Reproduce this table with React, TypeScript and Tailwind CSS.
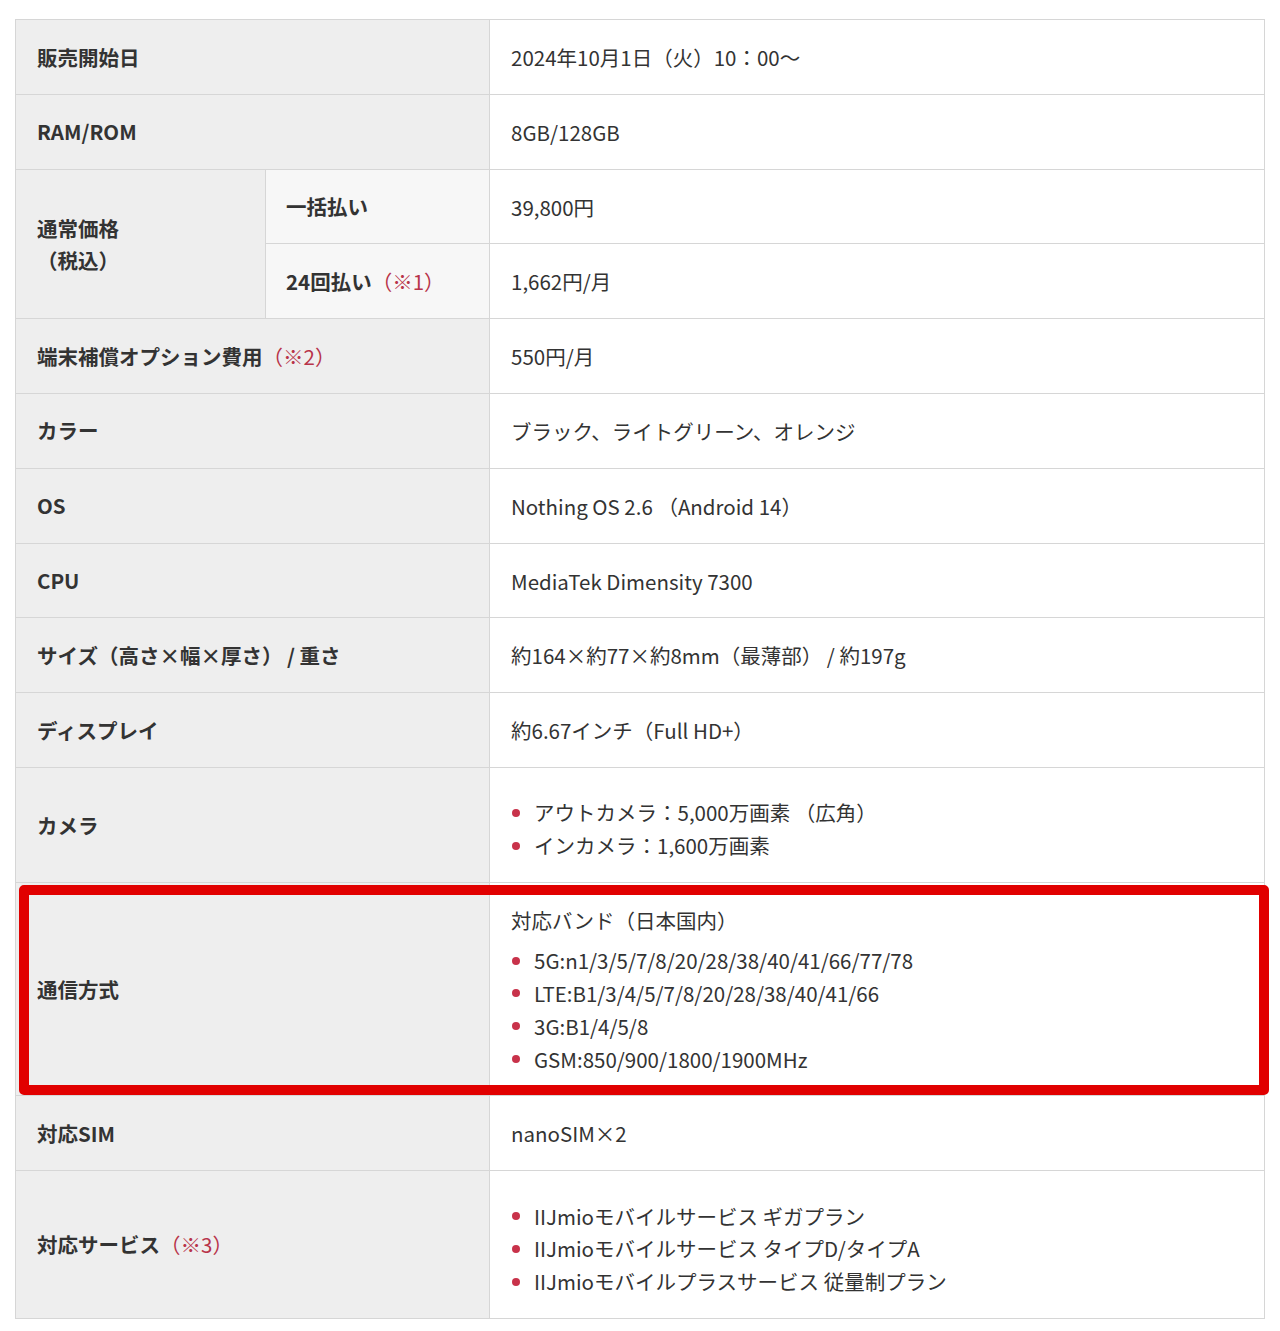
import React from 'react';

type Row = {
    label: React.ReactNode;
    value: React.ReactNode;
};

const Note = ({ n }: { n: number }) => (
    <span className="font-normal text-[#b8344a]">（※{n}）</span>
);

const Bullets = ({ items }: { items: string[] }) => (
    <ul className="mt-[7.4px]">
        {items.map((item) => (
            <li key={item} className="flex items-center">
                <span className="w-[8px] h-[8px] rounded-full bg-[#c8324a] ml-[1px] mr-[14px] shrink-0" />
                {item}
            </li>
        ))}
    </ul>
);

const Label = ({ children }: { children: React.ReactNode }) => (
    <div className="w-[473px] shrink-0 bg-[#eeeeee] pl-[21px] pr-4 flex items-center font-bold">
        {children}
    </div>
);

const Value = ({ children }: { children: React.ReactNode }) => (
    <div className="flex-1 border-l border-[#d6d6d6] pl-[21px] pr-4 pt-[21px] pb-[20px]">
        {children}
    </div>
);

const SpecRow = ({ label, value, last }: Row & { last?: boolean }) => (
    <div className={last ? 'flex' : 'flex border-b border-[#d6d6d6]'}>
        <Label>{label}</Label>
        <Value>{value}</Value>
    </div>
);

const topRows: Row[] = [
    { label: '販売開始日', value: '2024年10月1日（火）10：00〜' },
    { label: 'RAM/ROM', value: '8GB/128GB' },
];

const midRows: Row[] = [
    { label: <>端末補償オプション費用<Note n={2} /></>, value: '550円/月' },
    { label: 'カラー', value: 'ブラック、ライトグリーン、オレンジ' },
    { label: 'OS', value: 'Nothing OS 2.6 （Android 14）' },
    { label: 'CPU', value: 'MediaTek Dimensity 7300' },
    { label: 'サイズ（高さ×幅×厚さ） / 重さ', value: '約164×約77×約8mm（最薄部） / 約197g' },
    { label: 'ディスプレイ', value: '約6.67インチ（Full HD+）' },
    {
        label: 'カメラ',
        value: <Bullets items={['アウトカメラ：5,000万画素 （広角）', 'インカメラ：1,600万画素']} />,
    },
];

export default function App() {
    return (
        <main
            className="min-h-[1331px] bg-white pt-[19px] pl-[15px] text-[20.5px] leading-[32.8px] text-[#333333]"
            style={{ fontFamily: '"Noto Sans CJK JP", "Noto Sans", sans-serif' }}
        >
            <div className="w-[1250px] border border-[#d6d6d6]">
                {topRows.map((r) => (
                    <SpecRow key={String(r.label)} {...r} />
                ))}

                {/* 通常価格 */}
                <div className="flex border-b border-[#d6d6d6]">
                    <div className="w-[249px] shrink-0 bg-[#eeeeee] pl-[21px] flex flex-col justify-center font-bold leading-[32px]">
                        <span>通常価格</span>
                        <span>（税込）</span>
                    </div>
                    <div className="flex-1 border-l border-[#d6d6d6]">
                        <div className="flex border-b border-[#d6d6d6]">
                            <div className="w-[223px] shrink-0 bg-[#f7f7f7] pl-[20px] flex items-center font-bold">
                                一括払い
                            </div>
                            <Value>39,800円</Value>
                        </div>
                        <div className="flex">
                            <div className="w-[223px] shrink-0 bg-[#f7f7f7] pl-[20px] flex items-center font-bold">
                                24回払い<Note n={1} />
                            </div>
                            <Value>1,662円/月</Value>
                        </div>
                    </div>
                </div>

                {midRows.map((r, i) => (
                    <SpecRow key={i} {...r} />
                ))}

                {/* 通信方式 (highlighted) */}
                <div className="relative flex border-b border-[#d6d6d6]">
                    <Label>通信方式</Label>
                    <Value>
                        <p>対応バンド（日本国内）</p>
                        <Bullets
                            items={[
                                '5G:n1/3/5/7/8/20/28/38/40/41/66/77/78',
                                'LTE:B1/3/4/5/7/8/20/28/38/40/41/66',
                                '3G:B1/4/5/8',
                                'GSM:850/900/1800/1900MHz',
                            ]}
                        />
                    </Value>
                    <div className="pointer-events-none absolute left-[3px] top-[2px] right-[-5px] bottom-0 border-[10px] border-[#e10000] rounded-[5px]" />
                </div>

                <SpecRow label="対応SIM" value="nanoSIM×2" />
                <SpecRow
                    last
                    label={<>対応サービス<Note n={3} /></>}
                    value={
                        <Bullets
                            items={[
                                'IIJmioモバイルサービス ギガプラン',
                                'IIJmioモバイルサービス タイプD/タイプA',
                                'IIJmioモバイルプラスサービス 従量制プラン',
                            ]}
                        />
                    }
                />
            </div>
        </main>
    );
}
